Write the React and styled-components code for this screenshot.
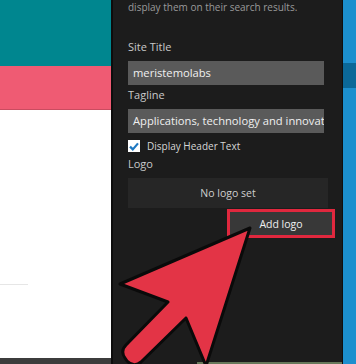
import React from 'react'
import styled, { createGlobalStyle } from 'styled-components'

const GlobalStyle = createGlobalStyle`
    html, body {
        margin: 0;
        padding: 0;
        background: #1c1c1c;
        overflow: hidden;
    }
    body {
        font-family: "Open Sans", "DejaVu Sans", sans-serif;
    }
`

function App() {
    return (
        <Screen>
            <GlobalStyle />
            <Preview>
                <TealHeader />
                <PinkBand />
                <WhitePage>
                    <FaintRule />
                </WhitePage>
                <PreviewFooter />
            </Preview>
            <Panel>
                <Intro>display them on their search results.</Intro>
                <FieldLabel space={25}>Site Title</FieldLabel>
                <TextField>meristemolabs</TextField>
                <FieldLabel space={2}>Tagline</FieldLabel>
                <TextField>Applications, technology and innovat</TextField>
                <CheckRow>
                    <CheckBox>
                        <svg width="10" height="9" viewBox="0 0 10 9">
                            <path d="M1 4.6 L3.8 7.4 L9 1.4" fill="none" stroke="#1e78c2" strokeWidth="2.2" />
                        </svg>
                    </CheckBox>
                    Display Header Text
                </CheckRow>
                <FieldLabel space={3}>Logo</FieldLabel>
                <LogoBox>No logo set</LogoBox>
                <ButtonRow>
                    <Highlight>
                        <AddButton>Add logo</AddButton>
                    </Highlight>
                </ButtonRow>
                <PanelFooter />
            </Panel>
            <SideStrip>
                <SideBand />
            </SideStrip>
            <Pointer width="356" height="364" viewBox="0 0 356 364">
                <path
                    d="M250 228 L206 366 L186 318 L141 362 Q134 368 127 361 L125 358 Q120 351 126 345 L168 302 L120 284 Z"
                    fill="#e33446"
                    stroke="#0a0a0a"
                    strokeWidth="3"
                    strokeLinejoin="round"
                />
            </Pointer>
        </Screen>
    )
}

export default App

const Screen = styled.div`
    position: relative;
    display: flex;
    width: 356px;
    height: 364px;
    overflow: hidden;
`

const Preview = styled.div`
    width: 111px;
    display: flex;
    flex-direction: column;
    border-right: 2px solid #0d0d0d;
`

const TealHeader = styled.div`
    height: 66px;
    background: #00868f;
`

const PinkBand = styled.div`
    height: 43px;
    background: #ef5b73;
    border-bottom: 1px solid #c94c60;
`

const WhitePage = styled.div`
    flex: 1;
    background: #ffffff;
    padding-top: 174px;
`

const FaintRule = styled.div`
    width: 28px;
    height: 1px;
    background: #e6e6e6;
`

const PreviewFooter = styled.div`
    height: 6px;
    background: #3c3c3c;
`

const Panel = styled.div`
    position: relative;
    width: 200px;
    padding: 0 14px 0 15px;
    background: #1c1c1c;
    border-right: 1px solid #0f0f0f;
    display: flex;
    flex-direction: column;
`

const Intro = styled.div`
    color: #9a9a9a;
    font-size: 10px;
    line-height: 14px;
`

const FieldLabel = styled.div`
    color: #c9c9c9;
    font-size: 11px;
    line-height: 16px;
    margin-top: ${p => p.space}px;
    margin-bottom: 6px;
`

const TextField = styled.div`
    width: 196px;
    height: 24px;
    box-sizing: border-box;
    padding: 0 5px;
    background: #5a5a5a;
    color: #f0f0f0;
    font-size: 11.2px;
    line-height: 24px;
    white-space: nowrap;
    overflow: hidden;
`

const CheckRow = styled.div`
    display: flex;
    align-items: center;
    gap: 7px;
    margin-top: 6px;
    color: #d6d6d6;
    font-size: 10px;
    line-height: 14px;
`

const CheckBox = styled.span`
    width: 12px;
    height: 12px;
    background: #ffffff;
    display: flex;
    align-items: center;
    justify-content: center;
`

const LogoBox = styled.div`
    height: 30px;
    background: #262626;
    color: #cfcfcf;
    font-size: 10.5px;
    display: flex;
    align-items: center;
    justify-content: center;
`

const ButtonRow = styled.div`
    display: flex;
    justify-content: flex-end;
    margin-top: 1px;
    margin-right: -7px;
`

const Highlight = styled.div`
    border: 3px solid #e0283e;
`

const AddButton = styled.div`
    width: 102px;
    height: 23px;
    background: #383838;
    color: #efefef;
    font-size: 10.5px;
    display: flex;
    align-items: center;
    justify-content: center;
`

const PanelFooter = styled.div`
    position: absolute;
    left: 84px;
    right: 0;
    bottom: 0;
    height: 2px;
    background: #67785a;
`

const SideStrip = styled.div`
    flex: 1;
    background: #1c8fce;
    padding-top: 63px;
`

const SideBand = styled.div`
    height: 25px;
    background: #0b6898;
`

const Pointer = styled.svg`
    position: absolute;
    left: 0;
    top: 0;
    pointer-events: none;
`
